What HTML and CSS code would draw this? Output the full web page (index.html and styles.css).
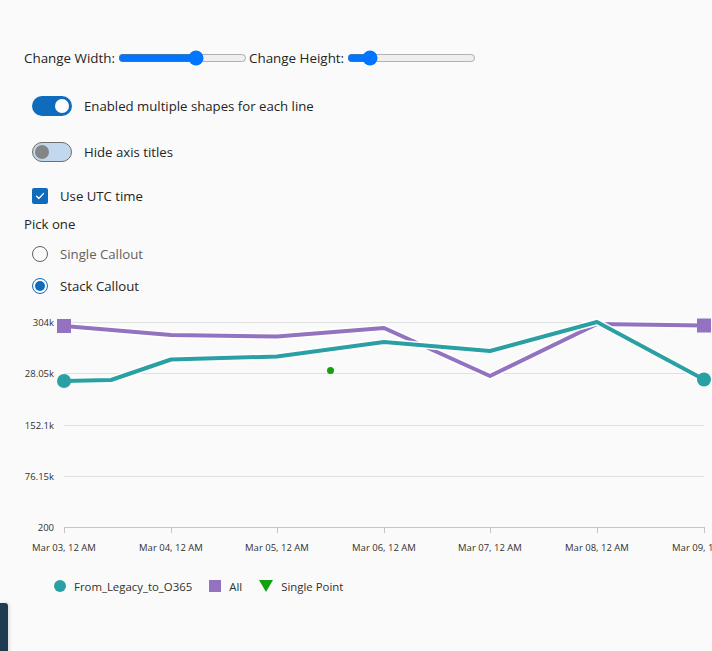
FILE: index.html
```html
<!DOCTYPE html>
<html lang="en">
<head>
<meta charset="utf-8">
<title>Line chart</title>
<link rel="stylesheet" href="styles.css">
</head>
<body>
<div class="page">
  <div class="controls">
    <div class="slider-row">
      <label class="slider-label">Change Width:</label>
      <input class="range" type="range" min="0" max="100" value="62">
      <label class="slider-label">Change Height:</label>
      <input class="range" type="range" min="0" max="100" value="13">
    </div>
    <div class="switch-row first">
      <span class="switch on"><span class="knob"></span></span>
      <span class="switch-text">Enabled multiple shapes for each line</span>
    </div>
    <div class="switch-row">
      <span class="switch off"><span class="knob"></span></span>
      <span class="switch-text">Hide axis titles</span>
    </div>
    <div class="check-row">
      <span class="checkbox">
        <svg width="12" height="12" viewBox="0 0 12 12"><path d="M2.6 6.2 L5 8.4 L9.4 3.6" fill="none" stroke="#fff" stroke-width="1.4" stroke-linecap="round" stroke-linejoin="round"/></svg>
      </span>
      <span class="check-text">Use UTC time</span>
    </div>
    <div class="group-label">Pick one</div>
    <div class="radio-row">
      <span class="radio"></span>
      <span class="radio-text muted">Single Callout</span>
    </div>
    <div class="radio-row">
      <span class="radio checked"><span class="dot"></span></span>
      <span class="radio-text">Stack Callout</span>
    </div>
  </div>

  <svg class="chart" width="712" height="270" viewBox="0 302 712 270">
    <g class="grid" stroke="#e1e1e1" stroke-width="1">
      <line x1="64" y1="322.5" x2="704" y2="322.5"/>
      <line x1="64" y1="373.5" x2="704" y2="373.5"/>
      <line x1="64" y1="425.5" x2="704" y2="425.5"/>
      <line x1="64" y1="476.5" x2="704" y2="476.5"/>
    </g>
    <g stroke="#c8c6c4" stroke-width="1">
      <line x1="64" y1="527.5" x2="704" y2="527.5"/>
      <line x1="64.5" y1="527" x2="64.5" y2="533"/>
      <line x1="171.5" y1="527" x2="171.5" y2="533"/>
      <line x1="277.5" y1="527" x2="277.5" y2="533"/>
      <line x1="384.5" y1="527" x2="384.5" y2="533"/>
      <line x1="490.5" y1="527" x2="490.5" y2="533"/>
      <line x1="597.5" y1="527" x2="597.5" y2="533"/>
      <line x1="704.5" y1="527" x2="704.5" y2="533"/>
    </g>
    <g class="ylabels" text-anchor="end">
      <text x="54" y="326">304k</text>
      <text x="54" y="377">28.05k</text>
      <text x="54" y="429">152.1k</text>
      <text x="54" y="480">76.15k</text>
      <text x="54" y="531">200</text>
    </g>
    <g class="xlabels" text-anchor="middle">
      <text x="64" y="551">Mar 03, 12 AM</text>
      <text x="171" y="551">Mar 04, 12 AM</text>
      <text x="277" y="551">Mar 05, 12 AM</text>
      <text x="384" y="551">Mar 06, 12 AM</text>
      <text x="490" y="551">Mar 07, 12 AM</text>
      <text x="597" y="551">Mar 08, 12 AM</text>
      <text x="704" y="551">Mar 09, 12 AM</text>
    </g>
    <path d="M64 326 L171 335 L277 336.5 L384 328 L490 376 L597 324 L704 325.5" fill="none" stroke="#ffffff" stroke-width="7" stroke-linejoin="round"/>
    <path d="M64 326 L171 335 L277 336.5 L384 328 L490 376 L597 324 L704 325.5" fill="none" stroke="#9373c0" stroke-width="4" stroke-linejoin="round"/>
    <rect x="57" y="319" width="14" height="14" fill="#9373c0"/>
    <rect x="697" y="318.5" width="14" height="14" fill="#9373c0"/>
    <path d="M64 381 L111 380 L171 359.5 L277 356.5 L384 342 L490 351 L597 322 L704 379.5" fill="none" stroke="#ffffff" stroke-width="7" stroke-linejoin="round"/>
    <path d="M64 381 L111 380 L171 359.5 L277 356.5 L384 342 L490 351 L597 322 L704 379.5" fill="none" stroke="#2aa0a4" stroke-width="4" stroke-linejoin="round"/>
    <circle cx="64" cy="381" r="7" fill="#2aa0a4"/>
    <circle cx="704" cy="379.5" r="7" fill="#2aa0a4"/>
    <circle cx="330.5" cy="370.5" r="3.5" fill="#13a10e"/>
  </svg>

  <div class="legend">
    <div class="legend-item">
      <svg width="12" height="12" viewBox="0 0 12 12"><circle cx="6" cy="6" r="6" fill="#2aa0a4"/></svg>
      <span>From_Legacy_to_O365</span>
    </div>
    <div class="legend-item">
      <svg width="12" height="12" viewBox="0 0 12 12"><rect x="0" y="0" width="12" height="12" fill="#9373c0"/></svg>
      <span>All</span>
    </div>
    <div class="legend-item">
      <svg width="14" height="12" viewBox="0 0 14 12"><path d="M0 0 L14 0 L7 12 Z" fill="#13a10e"/></svg>
      <span>Single Point</span>
    </div>
  </div>
</div>
<div class="side-tab"></div>
</body>
</html>
```

FILE: styles.css
```css
html, body {
  margin: 0;
  padding: 0;
  background: #fafafa;
}

body {
  font-family: "Open Sans", "Noto Sans", sans-serif;
  color: #242424;
  font-size: 13.2px;
  overflow: hidden;
}

.page {
  width: 712px;
  height: 651px;
}

.controls {
  padding: 48px 24px 0 24px;
}

.slider-row {
  display: flex;
  align-items: center;
  height: 20px;
}

.slider-label {
  font-size: 13.4px;
  line-height: 20px;
}

.range {
  width: 129px;
  margin: 0 2px 0 3px;
}

.switch-row {
  display: flex;
  align-items: center;
  height: 20px;
  margin-top: 26px;
  padding-left: 8px;
}

.switch-row.first {
  margin-top: 28px;
}

.switch {
  box-sizing: border-box;
  width: 40px;
  height: 20px;
  border-radius: 10px;
  display: flex;
  align-items: center;
  padding: 0 3px;
}

.switch.on {
  background: #0f6cbd;
  justify-content: flex-end;
}

.switch.off {
  background: #c2d8ee;
  border: 1px solid #6e6e6e;
  justify-content: flex-start;
  padding: 0 2px;
}

.knob {
  width: 14px;
  height: 14px;
  border-radius: 50%;
}

.switch.on .knob {
  background: #ffffff;
}

.switch.off .knob {
  background: #858585;
}

.switch-text {
  margin-left: 12px;
  line-height: 20px;
}

.check-row {
  display: flex;
  align-items: center;
  height: 16px;
  margin-top: 26px;
  padding-left: 8px;
}

.checkbox {
  width: 16px;
  height: 16px;
  border-radius: 2px;
  background: #0f6cbd;
  display: flex;
  align-items: center;
  justify-content: center;
}

.check-text {
  margin-left: 12px;
  line-height: 20px;
}

.group-label {
  margin-top: 10px;
  line-height: 20px;
}

.radio-row {
  display: flex;
  align-items: center;
  height: 32px;
  padding-left: 8px;
}

.group-label + .radio-row {
  margin-top: 4px;
}

.radio {
  box-sizing: border-box;
  width: 16px;
  height: 16px;
  border-radius: 50%;
  border: 1px solid #616161;
  display: flex;
  align-items: center;
  justify-content: center;
}

.radio.checked {
  border-color: #0f6cbd;
}

.dot {
  width: 10px;
  height: 10px;
  border-radius: 50%;
  background: #0f6cbd;
}

.radio-text {
  margin-left: 12px;
  line-height: 20px;
}

.radio-text.muted {
  color: #616161;
}

.chart {
  display: block;
}

.chart text {
  font-family: "Open Sans", "Noto Sans", sans-serif;
  font-size: 9.5px;
  fill: #323130;
}

.legend {
  display: flex;
  align-items: center;
  height: 16px;
  margin-top: 6px;
  padding-left: 54px;
  gap: 17px;
  font-size: 11.4px;
  color: #323130;
}

.legend-item {
  display: flex;
  align-items: center;
  gap: 8px;
}

.side-tab {
  position: fixed;
  left: 0;
  top: 603px;
  width: 8px;
  height: 60px;
  background: #1f3b50;
  border-top-right-radius: 3px;
  box-shadow: 1px 0 4px rgba(0, 0, 0, 0.15);
}
```
